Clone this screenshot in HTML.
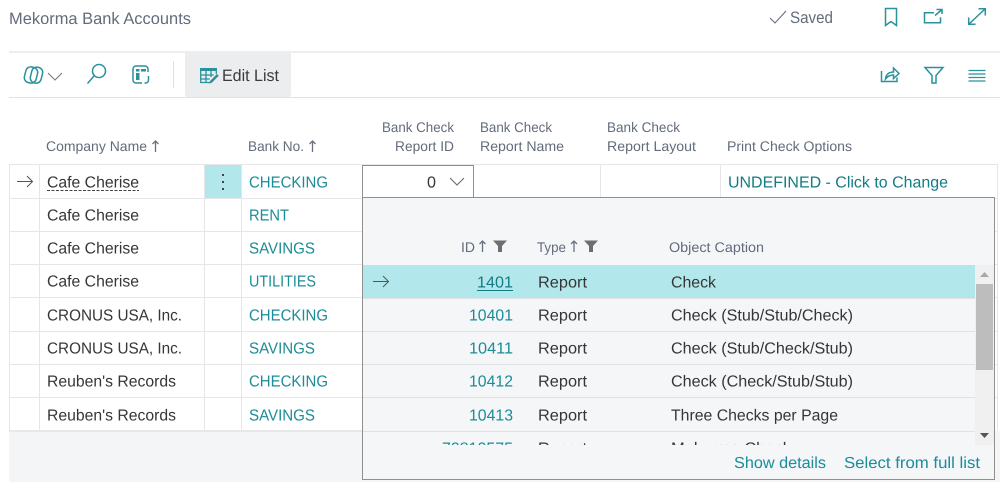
<!DOCTYPE html>
<html>
<head>
<meta charset="utf-8">
<style>
html,body{margin:0;padding:0;background:#fff;width:1000px;height:482px;overflow:hidden}
svg{display:block}
text{font-family:"Liberation Sans",Arial,sans-serif;text-rendering:geometricPrecision}
.t{font-size:16px;fill:#363636;transform:translateY(-.6px)}
.l{font-size:16px;fill:#1b8c98;transform:translateY(-.6px)}
.d{font-size:16px;fill:#137c84;transform:translateY(-.6px)}
.h{font-size:14px;fill:#626c7a}
.i{fill:none;stroke:#2a929c;stroke-width:1.5}
</style>
</head>
<body>
<svg width="1000" height="482" viewBox="0 0 1000 482" xmlns="http://www.w3.org/2000/svg">
<defs><clipPath id="c"><rect x="363" y="265" width="612" height="180"/></clipPath></defs>
<rect width="1000" height="482" fill="#fff"/>

<!-- Title bar -->
<text x="9" y="24" font-size="16.500" fill="#626c7a" textLength="182" lengthAdjust="spacingAndGlyphs">Mekorma Bank Accounts</text>
<path d="M770 18l5 5 11-12" fill="none" stroke="#66707e" stroke-width="1.100"/>
<text x="790" y="23" font-size="16.500" fill="#626c7a" textLength="43" lengthAdjust="spacingAndGlyphs">Saved</text>
<path class="i" d="M885.500 8.500h11v17l-5.500-4-5.500 4z"/>
<path class="i" d="M934 12.700h-9.500v10h16v-5.500M935 15.500l6.500-5.500M936.500 9.500h5.500v4.500"/>
<path class="i" d="M969 24l16-15M978.500 8.700h6.800v6.800M968.700 17.500v6.800h6.800"/>
<rect x="9" y="51" width="991" height="2" fill="#eeeeee"/>

<!-- Toolbar -->
<g class="i">
<rect x="25" y="67" width="12" height="16" rx="5" transform="rotate(14 31 75)"/>
<rect x="31" y="67" width="11" height="16" rx="5" transform="rotate(14 36 75)"/>
</g>
<path d="M48 73l7 7 7-7" fill="none" stroke="#777" stroke-width="1"/>
<circle cx="99" cy="71" r="6.500" class="i"/>
<path class="i" d="M94 76l-6.500 7.500"/>
<path class="i" d="M148 72v-3a3 3 0 0 0-3-3h-9a3 3 0 0 0-3 3v11a3 3 0 0 0 3 3h6"/>
<path class="i" d="M148.500 76v4a3 3 0 0 1-3 3h-1"/>
<rect x="136" y="69" width="3.500" height="2.500" fill="#2a929c"/>
<rect x="141" y="69" width="5" height="2.500" fill="#2a929c"/>
<rect x="136" y="73" width="3.500" height="7" fill="#2a929c"/>
<rect x="173" y="61" width="1" height="27" fill="#e0e0e0"/>
<rect x="185" y="52" width="106" height="45" rx="2" fill="#ebedef"/>
<g fill="#2a929c">
<path d="M200 68h17v3h-17z"/>
<path d="M200.700 71v11.500h9M216.300 71v3M206 71v11.500M211 71v6M200.700 75h13M200.700 79h9" fill="none" stroke="#2a929c" stroke-width="1.300"/>
<path d="M217 74l1.800 1.800-7 7-2.600.8.800-2.600z"/>
</g>
<text x="222" y="81" font-size="16.500" fill="#3b3b3b" textLength="57" lengthAdjust="spacingAndGlyphs">Edit List</text>
<path class="i" d="M881.500 71v10.500h15.500v-4"/>
<path class="i" d="M885.500 79c.5-5 4-7 8-7v-4l5.500 5.500-5.500 5v-3.500c-3.500 0-6 1.500-8 4z"/>
<path class="i" d="M925 67.500h18l-7 8v7.500h-4v-7.500z"/>
<path d="M968.500 70.500h17M968.500 74h17M968.500 77.500h17M968.500 81h17" fill="none" stroke="#2a929c" stroke-width="1.300"/>
<rect x="9" y="97" width="991" height="1" fill="#e2e2e2"/>

<!-- Headers -->
<text class="h" x="46" y="151" textLength="101" lengthAdjust="spacingAndGlyphs">Company Name</text>
<path d="M155.500 152v-11M152.500 144l3-3 3 3" fill="none" stroke="#66707e" stroke-width="1.300"/>
<text class="h" x="248" y="151" textLength="56" lengthAdjust="spacingAndGlyphs">Bank No.</text>
<path d="M312.500 152v-11M309.500 144l3-3 3 3" fill="none" stroke="#66707e" stroke-width="1.300"/>
<text class="h" x="382" y="132" textLength="72" lengthAdjust="spacingAndGlyphs">Bank Check</text>
<text class="h" x="395" y="151" textLength="59" lengthAdjust="spacingAndGlyphs">Report ID</text>
<text class="h" x="480" y="132" textLength="72" lengthAdjust="spacingAndGlyphs">Bank Check</text>
<text class="h" x="480" y="151" textLength="84" lengthAdjust="spacingAndGlyphs">Report Name</text>
<text class="h" x="607" y="132" textLength="73" lengthAdjust="spacingAndGlyphs">Bank Check</text>
<text class="h" x="607" y="151" textLength="89" lengthAdjust="spacingAndGlyphs">Report Layout</text>
<text class="h" x="727" y="151" textLength="125" lengthAdjust="spacingAndGlyphs">Print Check Options</text>

<!-- Table -->
<rect x="9" y="431" width="991" height="51" fill="#f4f5f7"/>
<rect x="205" y="165" width="36" height="33" fill="#b2e8eb"/>
<g stroke="#e6e6e6" stroke-width="1" fill="none">
<path d="M9 164.500H998M9 198.500H998M9 231.500H998M9 264.500H998M9 297.500H998M9 331.500H998M9 364.500H998M9 397.500H998"/>
<path d="M9.500 165V431M39.500 165V431M204.500 165V431M241.500 165V431M997.500 165V431M600.500 165V198M720.500 165V198M473.500 165V198"/>
</g>
<rect x="9" y="430" width="353" height="2" fill="#e8e8e8"/>

<path d="M17 181.500h15M27 176l5.500 5.500-5.500 5.500" fill="none" stroke="#555" stroke-width="1"/>
<text class="t" x="47" y="188" textLength="92" lengthAdjust="spacingAndGlyphs">Cafe Cherise</text>
<path d="M47 190.500H139" stroke="#444" stroke-width="1" stroke-dasharray="3 1.500"/>
<g fill="#444"><rect x="222" y="174" width="2" height="2"/><rect x="222" y="181" width="2" height="2"/><rect x="222" y="188" width="2" height="2"/></g>
<text class="l" x="249" y="188" textLength="79" lengthAdjust="spacingAndGlyphs">CHECKING</text>
<text class="t" x="47" y="221" textLength="92" lengthAdjust="spacingAndGlyphs">Cafe Cherise</text>
<text class="l" x="249" y="221" textLength="40" lengthAdjust="spacingAndGlyphs">RENT</text>
<text class="t" x="47" y="254" textLength="92" lengthAdjust="spacingAndGlyphs">Cafe Cherise</text>
<text class="l" x="249" y="254" textLength="66" lengthAdjust="spacingAndGlyphs">SAVINGS</text>
<text class="t" x="47" y="287" textLength="92" lengthAdjust="spacingAndGlyphs">Cafe Cherise</text>
<text class="l" x="249" y="287" textLength="67" lengthAdjust="spacingAndGlyphs">UTILITIES</text>
<text class="t" x="47" y="321" textLength="135" lengthAdjust="spacingAndGlyphs">CRONUS USA, Inc.</text>
<text class="l" x="249" y="321" textLength="79" lengthAdjust="spacingAndGlyphs">CHECKING</text>
<text class="t" x="47" y="354" textLength="135" lengthAdjust="spacingAndGlyphs">CRONUS USA, Inc.</text>
<text class="l" x="249" y="354" textLength="66" lengthAdjust="spacingAndGlyphs">SAVINGS</text>
<text class="t" x="47" y="387" textLength="129" lengthAdjust="spacingAndGlyphs">Reuben's Records</text>
<text class="l" x="249" y="387" textLength="79" lengthAdjust="spacingAndGlyphs">CHECKING</text>
<text class="t" x="47" y="421" textLength="129" lengthAdjust="spacingAndGlyphs">Reuben's Records</text>
<text class="l" x="249" y="421" textLength="66" lengthAdjust="spacingAndGlyphs">SAVINGS</text>

<!-- Edit cell -->
<rect x="362.500" y="165.500" width="111" height="32" fill="#fff" stroke="#8f8f8f"/>
<text class="t" x="427" y="188" textLength="9" lengthAdjust="spacingAndGlyphs">0</text>
<path d="M450 178l7 7 7-7" fill="none" stroke="#666" stroke-width="1"/>
<text class="d" x="728" y="188" textLength="220" lengthAdjust="spacingAndGlyphs">UNDEFINED - Click to Change</text>

<!-- Popup -->
<rect x="362.500" y="197.500" width="632" height="282" fill="#f5f6f8" stroke="#8f8f8f"/>
<text class="h" x="461" y="252" textLength="14" lengthAdjust="spacingAndGlyphs">ID</text>
<path d="M482.500 252v-11M479.500 244l3-3 3 3" fill="none" stroke="#66707e" stroke-width="1.300"/>
<path d="M493 240.500h14l-5 5.500v6h-4v-6z" fill="#6e6e6e"/>
<text class="h" x="537" y="252" textLength="29" lengthAdjust="spacingAndGlyphs">Type</text>
<path d="M574 252v-11M571 244l3-3 3 3" fill="none" stroke="#66707e" stroke-width="1.300"/>
<path d="M584 240.500h14l-5 5.500v6h-4v-6z" fill="#6e6e6e"/>
<text class="h" x="669" y="252" textLength="95" lengthAdjust="spacingAndGlyphs">Object Caption</text>

<rect x="363" y="265" width="612" height="33" fill="#b2e8eb"/>
<rect x="975" y="265" width="19" height="180" fill="#f0f0f0"/>
<g stroke="#dfe1e4" stroke-width="1"><path d="M363 298.500H975M363 331.500H975M363 364.500H975M363 397.500H975M363 431.500H975"/></g>

<path d="M373 281.500h15M383 276l5.500 5.500-5.500 5.500" fill="none" stroke="#555" stroke-width="1"/>
<text class="d" x="477" y="288" textLength="36" lengthAdjust="spacingAndGlyphs">1401</text>
<path d="M477 290.500H513" stroke="#137c84" stroke-width="1"/>
<text class="t" x="538" y="288" textLength="49" lengthAdjust="spacingAndGlyphs">Report</text>
<text class="t" x="671" y="288" textLength="45" lengthAdjust="spacingAndGlyphs">Check</text>

<text class="l" x="469" y="321" textLength="44" lengthAdjust="spacingAndGlyphs">10401</text>
<text class="t" x="538" y="321" textLength="49" lengthAdjust="spacingAndGlyphs">Report</text>
<text class="t" x="671" y="321" textLength="182" lengthAdjust="spacingAndGlyphs">Check (Stub/Stub/Check)</text>
<text class="l" x="469" y="354" textLength="44" lengthAdjust="spacingAndGlyphs">10411</text>
<text class="t" x="538" y="354" textLength="49" lengthAdjust="spacingAndGlyphs">Report</text>
<text class="t" x="671" y="354" textLength="182" lengthAdjust="spacingAndGlyphs">Check (Stub/Check/Stub)</text>
<text class="l" x="469" y="387" textLength="44" lengthAdjust="spacingAndGlyphs">10412</text>
<text class="t" x="538" y="387" textLength="49" lengthAdjust="spacingAndGlyphs">Report</text>
<text class="t" x="671" y="387" textLength="182" lengthAdjust="spacingAndGlyphs">Check (Check/Stub/Stub)</text>
<text class="l" x="469" y="421" textLength="44" lengthAdjust="spacingAndGlyphs">10413</text>
<text class="t" x="538" y="421" textLength="49" lengthAdjust="spacingAndGlyphs">Report</text>
<text class="t" x="671" y="421" textLength="167" lengthAdjust="spacingAndGlyphs">Three Checks per Page</text>
<g clip-path="url(#c)">
<text class="l" x="442" y="454" textLength="71" lengthAdjust="spacingAndGlyphs">70810575</text>
<text class="t" x="538" y="454" textLength="49" lengthAdjust="spacingAndGlyphs">Report</text>
<text class="t" x="671" y="454" textLength="120" lengthAdjust="spacingAndGlyphs">Mekorma Check</text>
</g>

<!-- Scrollbar -->
<path d="M980 277l4.500-5 4.500 5z" fill="#a8a8a8"/>
<rect x="976" y="284" width="17" height="86" fill="#bdbdbd"/>
<path d="M980 433l4.500 5 4.500-5z" fill="#555"/>

<text class="l" x="734" y="468.600" textLength="92" lengthAdjust="spacingAndGlyphs">Show details</text>
<text class="l" x="844" y="468.600" textLength="136" lengthAdjust="spacingAndGlyphs">Select from full list</text>
</svg>
</body>
</html>
